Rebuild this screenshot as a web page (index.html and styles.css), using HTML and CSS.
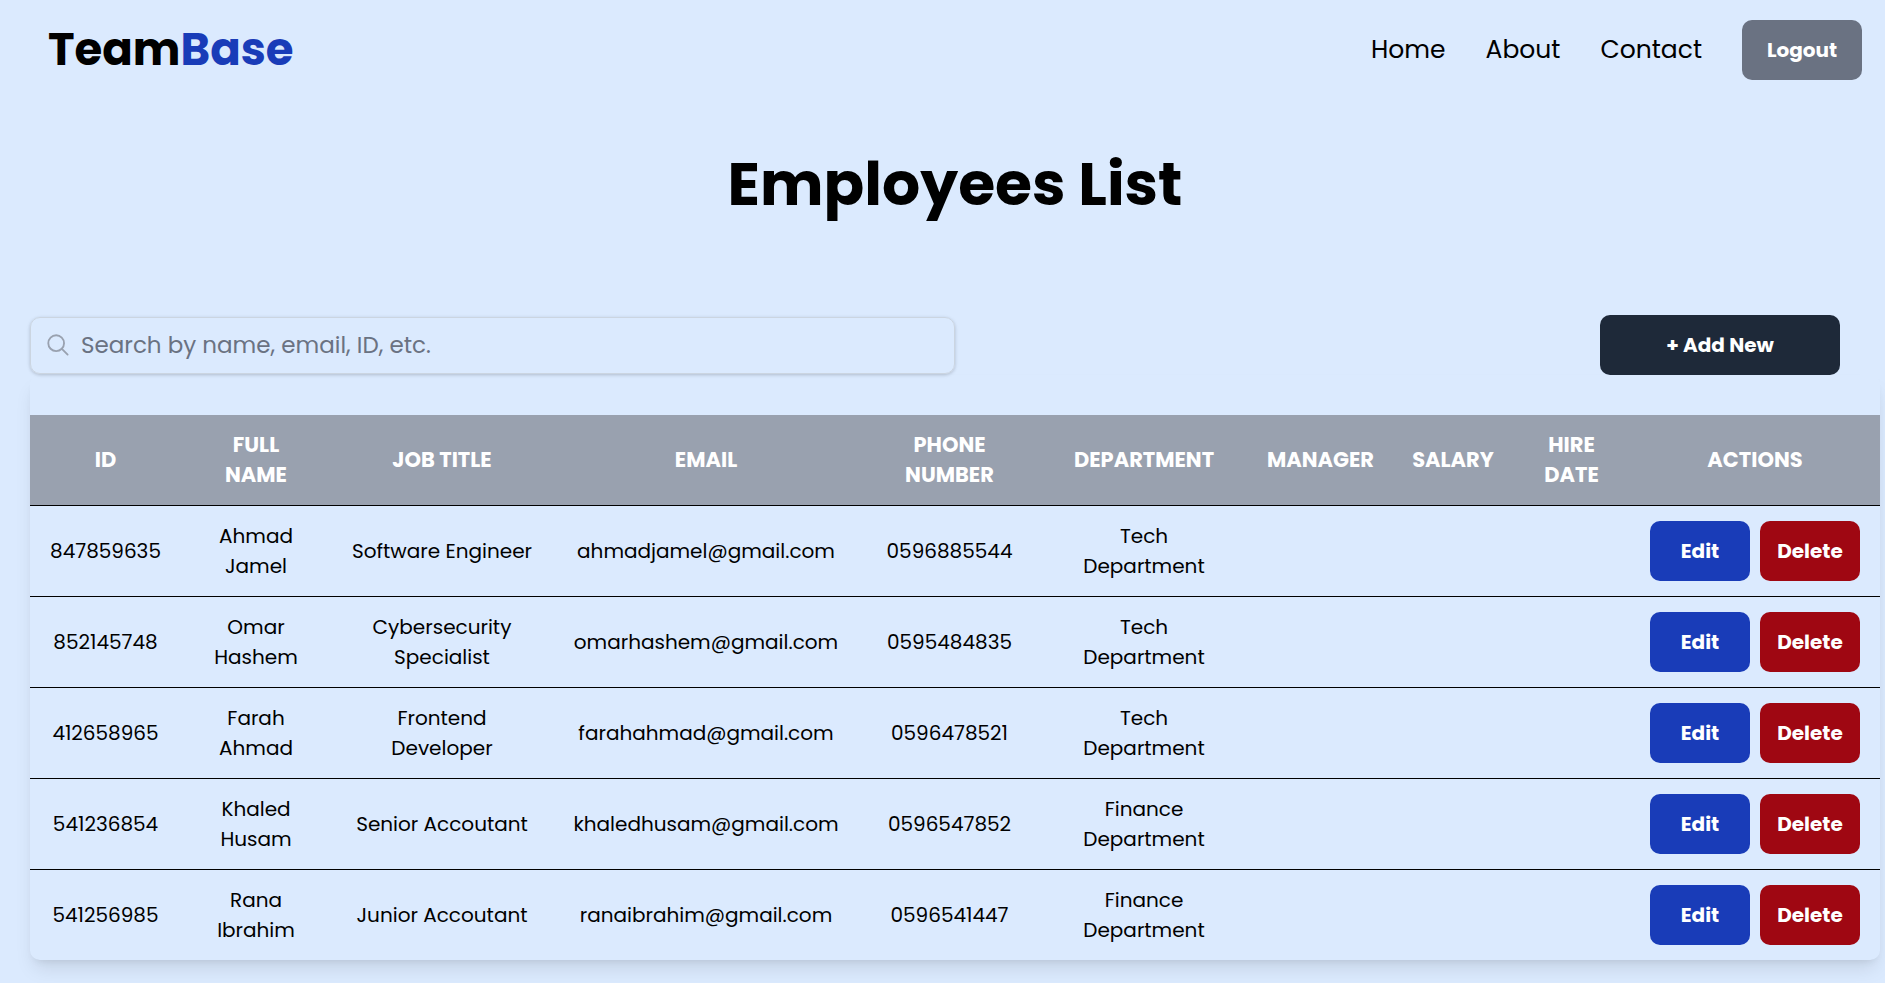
FILE: index.html
```
<!DOCTYPE html>
<html lang="en">
<head>
<meta charset="utf-8">
<title>TeamBase</title>
<link rel="stylesheet" href="styles.css">
</head>
<body>
<header class="navbar">
  <a class="logo" href="#">Team<span class="logo-accent">Base</span></a>
  <nav class="nav-links">
    <a href="#">Home</a>
    <a href="#">About</a>
    <a href="#">Contact</a>
    <button class="btn btn-logout" type="button">Logout</button>
  </nav>
</header>
<main class="page">
  <h1 class="title">Employees List</h1>
  <div class="toolbar">
    <label class="search">
      <svg class="search-icon" viewBox="0 0 24 24" fill="none" stroke="currentColor" stroke-width="2" stroke-linecap="round" aria-hidden="true"><circle cx="10" cy="10" r="8.6"/><path d="M16.5 16.5L22.5 22.5"/></svg>
      <input class="search-input" type="text" aria-label="Search employees" placeholder="Search by name, email, ID, etc.">
    </label>
    <button class="btn btn-add" type="button">+ Add New</button>
  </div>
  <div class="card">
    <table class="table">
      <colgroup>
        <col class="col-id"><col class="col-name"><col class="col-job"><col class="col-email"><col class="col-phone"><col class="col-dept"><col class="col-manager"><col class="col-salary"><col class="col-hire"><col class="col-actions">
      </colgroup>
      <thead>
        <tr><th>ID</th><th>FULL<br>NAME</th><th>JOB TITLE</th><th>EMAIL</th><th>PHONE<br>NUMBER</th><th>DEPARTMENT</th><th>MANAGER</th><th>SALARY</th><th>HIRE<br>DATE</th><th>ACTIONS</th></tr>
      </thead>
      <tbody>
        <tr><td>847859635</td><td>Ahmad<br>Jamel</td><td>Software Engineer</td><td>ahmadjamel@gmail.com</td><td>0596885544</td><td>Tech<br>Department</td><td></td><td></td><td></td><td><div class="actions"><button class="btn btn-edit" type="button">Edit</button><button class="btn btn-delete" type="button">Delete</button></div></td></tr>
        <tr><td>852145748</td><td>Omar<br>Hashem</td><td>Cybersecurity<br>Specialist</td><td>omarhashem@gmail.com</td><td>0595484835</td><td>Tech<br>Department</td><td></td><td></td><td></td><td><div class="actions"><button class="btn btn-edit" type="button">Edit</button><button class="btn btn-delete" type="button">Delete</button></div></td></tr>
        <tr><td>412658965</td><td>Farah<br>Ahmad</td><td>Frontend<br>Developer</td><td>farahahmad@gmail.com</td><td>0596478521</td><td>Tech<br>Department</td><td></td><td></td><td></td><td><div class="actions"><button class="btn btn-edit" type="button">Edit</button><button class="btn btn-delete" type="button">Delete</button></div></td></tr>
        <tr><td>541236854</td><td>Khaled<br>Husam</td><td>Senior Accoutant</td><td>khaledhusam@gmail.com</td><td>0596547852</td><td>Finance<br>Department</td><td></td><td></td><td></td><td><div class="actions"><button class="btn btn-edit" type="button">Edit</button><button class="btn btn-delete" type="button">Delete</button></div></td></tr>
        <tr><td>541256985</td><td>Rana<br>Ibrahim</td><td>Junior Accoutant</td><td>ranaibrahim@gmail.com</td><td>0596541447</td><td>Finance<br>Department</td><td></td><td></td><td></td><td><div class="actions"><button class="btn btn-edit" type="button">Edit</button><button class="btn btn-delete" type="button">Delete</button></div></td></tr>
      </tbody>
    </table>
  </div>
</main>
</body>
</html>
```
FILE: styles.css
```
* { box-sizing: border-box; }
body {
  margin: 0;
  background: #dbeafe;
  color: #000;
  font-family: Poppins, Inter, "Open Sans", sans-serif;
  font-size: 20px;
  line-height: 30px;
}
a { color: inherit; text-decoration: none; }

.navbar {
  display: flex;
  align-items: center;
  justify-content: space-between;
  padding: 20px 23px 20px 48px;
}
.logo { font-size: 45px; line-height: 60px; font-weight: 700; }
.logo-accent { color: #193cb8; }
.nav-links { display: flex; align-items: center; gap: 40px; font-size: 25px; }

.btn {
  height: 60px;
  border: 0;
  border-radius: 10px;
  padding: 0;
  color: #fff;
  font: inherit;
  font-size: 20px;
  font-weight: 700;
}
.btn-logout { width: 120px; background: #6a7282; }
.btn-add { width: 240px; background: #1e2939; }
.btn-edit { width: 100px; background: #193cb8; }
.btn-delete { width: 100px; background: #9f0712; }

.page { padding: 0 5px 23px 30px; }
.title {
  margin: 52px 0 98px;
  font-size: 60px;
  line-height: 65px;
  font-weight: 700;
  text-align: center;
}

.toolbar {
  display: flex;
  align-items: center;
  justify-content: space-between;
  padding-right: 40px;
}
.search {
  display: flex;
  align-items: center;
  gap: 12px;
  flex: 0 1 925px;
  height: 57px;
  padding: 0 16px;
  border: 1px solid #cbd5e1;
  border-radius: 10px;
  box-shadow: 0 1px 4px rgb(0 0 0 / 10%), 0 1px 3px rgb(0 0 0 / 10%);
}
.search-icon { width: 22px; height: 22px; flex: none; color: #99a1af; }
.search-input {
  flex: 1;
  border: 0;
  padding: 0;
  background: none;
  outline: none;
  font: inherit;
  font-size: 23px;
}
.search-input::placeholder { color: #6a7282; }

.card {
  padding-top: 40px;
  border-radius: 10px;
  overflow: hidden;
  box-shadow: 0 12px 19px -4px rgb(0 0 0 / 10%), 0 5px 8px -5px rgb(0 0 0 / 10%);
}
.table { width: 100%; table-layout: fixed; border-collapse: separate; border-spacing: 0; text-align: center; }
.table th { padding: 15px 10px; background: #99a1af; color: #fff; font-size: 21px; border-bottom: 1px solid #000; }
.table td { padding: 15px 10px; border-bottom: 1px solid #000; }
.table tbody tr:last-child td { border-bottom: 0; }
.col-id { width: 151px; }
.col-name { width: 150px; }
.col-job { width: 222px; }
.col-email { width: 306px; }
.col-phone { width: 181px; }
.col-dept { width: 208px; }
.col-manager { width: 145px; }
.col-salary { width: 120px; }
.col-hire { width: 117px; }
.col-actions { width: 250px; }
.actions { display: flex; justify-content: center; gap: 10px; }
```
